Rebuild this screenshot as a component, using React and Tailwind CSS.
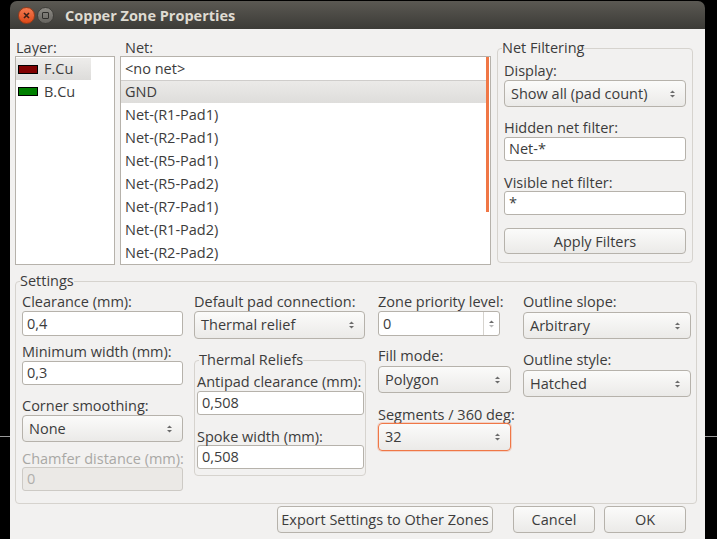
import React from 'react'

const font = "font-['Open_Sans',sans-serif]"

function Arrows({ dim }) {
  return (
    <svg width="7" height="10" viewBox="0 0 7 10" className="shrink-0">
      <path d="M1 4 L3.5 1.5 L6 4 Z" fill="#6b6b6b" />
      <path d="M1 6 L3.5 8.5 L6 6 Z" fill={dim ? '#b8b8b8' : '#6b6b6b'} />
    </svg>
  )
}

function Label({ children, className = '', disabled }) {
  return (
    <div className={`h-[18px] pt-[1px] leading-[18px] whitespace-nowrap ${disabled ? 'text-[#a9a8a5]' : ''} ${className}`}>
      {children}
    </div>
  )
}

function Input({ value, className = '', disabled }) {
  return (
    <div
      className={`flex items-center pl-[4px] rounded-[3px] border ${
        disabled ? 'bg-[#ebe9e6] border-[#cdcac5] text-[#b0afac]' : 'bg-white border-[#b6b2ab]'
      } ${className}`}
    >
      {value}
    </div>
  )
}

function Combo({ value, className = '', focus }) {
  return (
    <div
      className={`flex items-center justify-between pl-[6px] pr-[9px] rounded-[4px] border bg-gradient-to-b from-[#fbfbfa] to-[#ebeae8] ${
        focus ? 'border-[#f07746] shadow-[0_0_0_1px_rgba(240,119,70,0.25)]' : 'border-[#b6b2ab]'
      } ${className}`}
    >
      <span>{value}</span>
      <Arrows />
    </div>
  )
}

function Button({ children, className = '' }) {
  return (
    <div
      className={`flex items-center justify-center pt-[1px] rounded-[4px] border border-[#b6b2ab] bg-gradient-to-b from-[#fbfbfa] to-[#ebeae8] ${className}`}
    >
      {children}
    </div>
  )
}

const nets = [
  '<no net>',
  'GND',
  'Net-(R1-Pad1)',
  'Net-(R2-Pad1)',
  'Net-(R5-Pad1)',
  'Net-(R5-Pad2)',
  'Net-(R7-Pad1)',
  'Net-(R1-Pad2)',
  'Net-(R2-Pad2)',
]

export default function App() {
  return (
    <div className={`w-[717px] h-[539px] bg-black flex overflow-hidden text-[14.5px] text-[#3c3c3c] ${font}`}>
      {/* left desktop strip */}
      <div className="w-[10px] pt-[436px]">
        <div className="h-px bg-[#9a9a9a]" />
      </div>

      {/* window */}
      <div className="w-[695px] flex flex-col pt-[1px]">
        {/* Title bar */}
        <div className="h-[28px] rounded-t-[7px] bg-gradient-to-b from-[#5b5953] to-[#3c3b37] flex items-center pl-[8px]">
          <div className="w-[17px] h-[17px] rounded-full bg-gradient-to-b from-[#f47a4f] to-[#dd4814] border border-[#9a3a18] flex items-center justify-center">
            <svg width="7" height="7" viewBox="0 0 7 7">
              <path d="M1 1 L6 6 M6 1 L1 6" stroke="#3a2018" strokeWidth="1.6" />
            </svg>
          </div>
          <div className="ml-[2px] w-[17px] h-[17px] rounded-full bg-gradient-to-b from-[#8d8b85] to-[#66645f] border border-[#3f3e3a] flex items-center justify-center">
            <div className="w-[7px] h-[7px] border border-[#2f2e2b] rounded-[1px]" />
          </div>
          <div className="ml-[11px] pt-[2px] text-[14.5px] font-bold text-[#dfdbd2]">Copper Zone Properties</div>
        </div>

        {/* Body */}
        <div className="flex-1 bg-[#f2f1f0] flex flex-col">
          {/* top section */}
          <div className="flex pl-[5px] pt-[9px]">
            <div className="w-[100px] flex flex-col">
              <Label className="pl-[1px]">Layer:</Label>
              <div className="h-[209px] bg-white border border-[#b6b2ab] pt-px">
                <div className="w-[75px] h-[22px] flex items-center pl-[2px] bg-gradient-to-b from-[#eeedeb] to-[#dddcda]">
                  <div className="w-[20px] h-[9px] bg-[#800000] border border-black" />
                  <span className="ml-[6px]">F.Cu</span>
                </div>
                <div className="h-[23px] flex items-center pl-[2px]">
                  <div className="w-[20px] h-[9px] bg-[#008000] border border-black" />
                  <span className="ml-[6px]">B.Cu</span>
                </div>
              </div>
            </div>

            <div className="ml-[5px] w-[371px] flex flex-col">
              <Label className="pl-[5px]">Net:</Label>
              <div className="h-[209px] bg-white border border-[#b6b2ab] flex overflow-hidden">
                <div className="flex-1 flex flex-col">
                  {nets.map((n, i) => (
                    <div
                      key={n}
                      className={`h-[23px] shrink-0 flex items-center pl-[4px] ${
                        i === 1 ? 'bg-gradient-to-b from-[#ebeae8] to-[#dedddb] border-t border-[#cfcdcb]' : ''
                      }`}
                    >
                      {n}
                    </div>
                  ))}
                </div>
                <div className="w-[3px] mr-px">
                  <div className="h-[155px] bg-[#f07746]" />
                </div>
              </div>
            </div>

            <fieldset className="ml-[6px] mt-[2px] w-[196px] h-[223px] border border-[#d6d3ce] rounded-[4px] px-[6px]">
              <legend className="ml-[-2px] leading-[16px]">Net Filtering</legend>
              <Label className="mt-[5px]">Display:</Label>
              <Combo value="Show all (pad count)" className="mt-[1px] h-[27px]" />
              <Label className="mt-[11px]">Hidden net filter:</Label>
              <Input value="Net-*" className="mt-[1px] h-[24px]" />
              <Label className="mt-[12px]">Visible net filter:</Label>
              <Input value="*" className="h-[24px]" />
              <Button className="mt-[13px] h-[26px]">Apply Filters</Button>
            </fieldset>
          </div>

          {/* Settings */}
          <fieldset className="ml-[5px] mt-[8px] w-[682px] h-[231px] border border-[#d6d3ce] rounded-[4px] pl-[6px]">
            <legend className="ml-[-2px] leading-[16px]">Settings</legend>
            <div className="flex pt-[3px]">
              <div className="w-[161px] flex flex-col">
                <Label>Clearance (mm):</Label>
                <Input value="0,4" className="mt-[1px] h-[25px]" />
                <Label className="mt-[6px]">Minimum width (mm):</Label>
                <Input value="0,3" className="mt-[1px] h-[24px]" />
                <Label className="mt-[11px]">Corner smoothing:</Label>
                <Combo value="None" className="mt-[1px] h-[27px]" />
                <Label className="mt-[7px]" disabled>Chamfer distance (mm):</Label>
                <Input value="0" disabled className="h-[24px]" />
              </div>

              <div className="ml-[11px] w-[172px] flex flex-col">
                <Label>Default pad connection:</Label>
                <Combo value="Thermal relief" className="mt-[1px] h-[28px] w-[171px]" />
                <fieldset className="mt-[13px] h-[124px] border border-[#d6d3ce] rounded-[4px] pl-[2px] pr-[1px]">
                  <legend className="ml-[2px] leading-[16px]">Thermal Reliefs</legend>
                  <Label className="mt-[4px]">Antipad clearance (mm):</Label>
                  <Input value="0,508" className="mt-[1px] h-[24px]" />
                  <Label className="mt-[12px]">Spoke width (mm):</Label>
                  <Input value="0,508" className="h-[24px]" />
                </fieldset>
              </div>

              <div className="ml-[12px] w-[133px] flex flex-col">
                <Label>Zone priority level:</Label>
                <div className="mt-[1px] h-[25px] w-[122px] flex rounded-[3px] border border-[#b6b2ab] bg-white">
                  <div className="flex-1 flex items-center pl-[4px]">0</div>
                  <div className="w-[16px] border-l border-[#d6d3ce] flex items-center justify-center">
                    <Arrows dim />
                  </div>
                </div>
                <Label className="mt-[10px]">Fill mode:</Label>
                <Combo value="Polygon" className="mt-[2px] h-[27px]" />
                <Label className="mt-[12px]">Segments / 360 deg:</Label>
                <Combo value="32" focus className="h-[28px]" />
              </div>

              <div className="ml-[12px] w-[168px] flex flex-col">
                <Label>Outline slope:</Label>
                <Combo value="Arbitrary" className="mt-[2px] h-[27px]" />
                <Label className="mt-[11px]">Outline style:</Label>
                <Combo value="Hatched" className="mt-[2px] h-[27px]" />
              </div>
            </div>
          </fieldset>

          {/* bottom buttons */}
          <div className="flex justify-end pr-[19px] mt-[2px]">
            <Button className="w-[216px] h-[27px]">Export Settings to Other Zones</Button>
            <Button className="ml-[20px] w-[82px] h-[27px]">Cancel</Button>
            <Button className="ml-[9px] w-[82px] h-[27px]">OK</Button>
          </div>
        </div>
      </div>

      {/* right desktop strip */}
      <div className="flex-1 pt-[436px]">
        <div className="h-px bg-[#9a9a9a]" />
      </div>
    </div>
  )
}
